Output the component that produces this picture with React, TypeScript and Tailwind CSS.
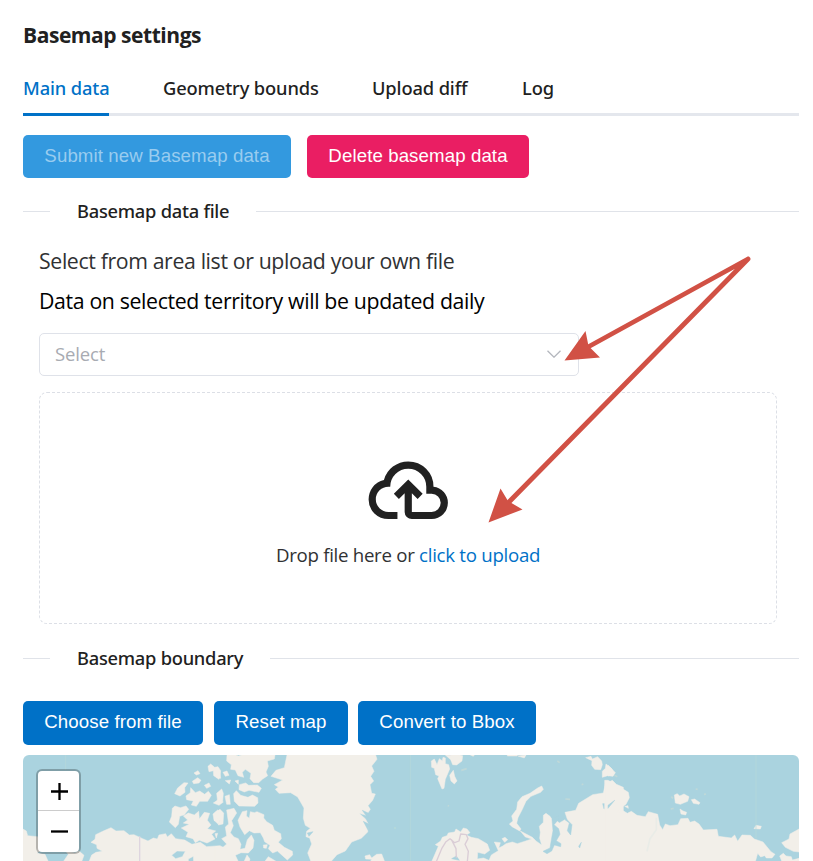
import React from "react";

const water = "#aad3df";
const land = "#f2efe9";

function Tab({ label, active, className }: { label: string; active?: boolean; className: string }) {
  return (
    <button
      className={`h-[54px] shrink-0 border-b-[3px] text-left font-['Noto_Sans',sans-serif] text-[18.3px] font-medium tracking-[-0.12px] whitespace-nowrap ${
        active ? "border-[#0071c7] text-[#0071c7]" : "border-[#e4e7ed] text-[#212121]"
      } ${className}`}
    >
      {label}
    </button>
  );
}

function Button({ label, className }: { label: string; className: string }) {
  return (
    <button
      className={`shrink-0 rounded-[5px] pb-[2px] text-center font-['Liberation_Sans',Arial,sans-serif] text-[18.67px] tracking-[0.1px] whitespace-nowrap ${className}`}
    >
      {label}
    </button>
  );
}

function Divider({ label, textClass }: { label: string; textClass: string }) {
  return (
    <div className="flex h-[28px] items-center">
      <div className="h-px w-[27px] bg-[#e0e3e9]" />
      <h2 className={`mx-[27px] shrink-0 font-['Noto_Sans',sans-serif] text-[18.3px] font-medium tracking-[-0.25px] whitespace-nowrap text-[#212121] ${textClass}`}>
        {label}
      </h2>
      <div className="h-px flex-1 bg-[#e0e3e9]" />
    </div>
  );
}

function CloudUpload() {
  return (
    <svg viewBox="0 0 24 24" className="h-[86.5px] w-[86.5px]" fill="#212121">
      <path d="M6.5 20Q4.22 20 2.61 18.43 1 16.85 1 14.58 1 12.63 2.17 11.1 3.35 9.57 5.25 9.15 5.88 6.85 7.75 5.43 9.63 4 12 4 14.93 4 16.96 6.04 19 8.07 19 11 20.73 11.2 21.86 12.5 23 13.78 23 15.5 23 17.38 21.69 18.69 20.38 20 18.5 20H13Q12.18 20 11.59 19.41 11 18.83 11 18V12.85L9.4 14.4 8 13 12 9 16 13 14.6 14.4 13 12.85V18H18.5Q19.55 18 20.27 17.27 21 16.55 21 15.5 21 14.45 20.27 13.73 19.55 13 18.5 13H17V11Q17 8.93 15.54 7.46 14.08 6 12 6 9.93 6 8.46 7.46 7 8.93 7 11H6.5Q5.05 11 4.03 12.03 3 13.05 3 14.5 3 15.95 4.03 17 5.05 18 6.5 18H9V20Z" />
    </svg>
  );
}

function WorldMap() {
  return (
    <svg viewBox="0 0 776 106" className="block h-[106px] w-[776px]">
      <rect width="776" height="106" fill={water} />
      {/* Alaska, northern Canada and the western arctic islands */}
      <g transform="translate(-8 -10) scale(.33333)" fill={land} stroke={land} strokeWidth="1.5" strokeLinejoin="round">
        <path d="M20 250L34 258 38 272 68 275 78 315 66 325 90 328 100 350H20Z" />
        <path d="M145 350L160 328 150 316 180 324 192 318 207 331 200 350Z" />
        <path d="M222 350L230 330 243 322 262 319 246 310 245 299 228 292 240 283 242 269 263 259 288 248 303 258 327 257 343 270 357 269 383 281 399 288 415 279 427 282 432 270 452 266 457 276 469 266 482 281 509 285 531 298 556 292 575 305 615 302 650 320V350Z" />
        <path d="M472 190L480 183 496 188 513 183 521 193 508 209 494 214 490 238 481 248 463 231 470 214Z" />
        <path d="M505 213L520 204 538 210 551 199 553 222 568 202 584 205 577 226 588 240 577 251 602 258 590 268 600 282 576 294 553 286 541 293 534 281 513 275 519 262 499 249 523 238 505 234 518 225Z" />
        <path d="M479 146L488 129 507 113 519 114 509 128 510 142 495 153Z" />
        <path d="M513 153L526 143 527 128 541 143 554 138 569 148 580 139 589 151 578 169 554 169 544 184 529 180 535 168 515 164Z" />
        <path d="M532 109L548 98 558 106 552 114 536 116Z" />
        <path d="M537 84L549 77 555 86 544 90Z" />
        <path d="M579 64L587 57 599 67 609 65 617 77 612 103 596 92 595 77 582 80Z" />
        <path d="M568 121L582 114 587 124 575 130Z" />
        <path d="M595 174L611 163 625 171 612 181Z" />
        <path d="M594 207L608 195 622 206 610 238 597 226Z" />
        <path d="M470 331L486 318 511 319 502 335 482 341Z M520 342L535 334 536 350H520Z" fill={water} />
        <path d="M374 274V350" stroke="#ded5df" strokeWidth="4" />
        <path d="M152 30V75" stroke="#b6dad9" strokeWidth="2" />
      </g>
      {/* Baffin Island, Ellesmere Island, Greenland and Iceland */}
      <g transform="translate(192 -10) scale(.33333)" fill={land} stroke={land} strokeWidth="1.5" strokeLinejoin="round">
        <path d="M36 30L49 25 70 33 97 25 128 30H180L178 42 157 48 160 64 153 81 158 92 142 103 131 113 116 113 105 101 108 85 91 73 82 82 86 97 69 92 61 75 47 73 49 59 35 48Z" />
        <path d="M73 119L92 114 101 121 127 120 139 130 132 142 102 136 88 141 72 134Z" />
        <path d="M56 146L64 137 77 151 99 157 112 150 128 158 129 174 119 184 72 183 58 169Z" />
        <path d="M5 145L20 132 25 145 23 169 8 171Z M30 154L43 149 46 178 35 178Z M0 69L15 78 17 100 5 98Z M24 82L36 78 42 91 31 94Z M31 107L47 105 43 117Z M60 108L70 105 70 118Z" />
        <path d="M69 226L82 200 96 197 94 213 103 220 106 200 118 203 126 200 147 209 146 219 155 230 173 241 178 256 197 266 199 281 190 292 208 307 232 319 233 330 217 345 196 326 187 318 173 324 160 311 165 301 149 290 145 279 136 263 117 264 103 257 89 269 75 246Z" />
        <path d="M35 195L57 190 65 204 50 227 55 242 46 263 57 276 70 281 78 298 75 313 90 310 97 284 109 270 117 286 114 309 100 324 78 323 61 331 70 350H0V307L24 307 35 297 20 281 35 273 31 246 41 237Z" />
        <path d="M0 203L15 193 26 204 24 237 10 240 15 225 2 219Z M0 266L8 265 4 279Z M145 300L157 299 154 310 146 309Z M87 350L96 330 105 342 103 350Z M149 350L160 335 185 350Z" />
        <path d="M216 30H482L486 43 470 63 477 79 467 94 476 108 465 119 470 145 481 147 473 166 459 182 466 193 454 211 432 205 451 221 461 239 458 261 439 280 410 291 391 318 366 329 348 350H288L278 324 290 297 284 279 273 275 275 259 286 250 271 241 265 220 267 189 248 156 227 143 192 145 181 133 190 126 178 119 203 105 168 94 183 76 208 68Z" />
        <path d="M461 205L442 196 460 221Z M463 238L445 229 460 257Z M277 264L294 260 282 274Z" fill={water} stroke={water} />
        <path d="M450 333L464 329 470 339 485 328 500 327 509 350H466L470 343 452 342Z" />
        <path d="M586 30V350" stroke="#b6dad9" strokeWidth="2" />
        <circle cx="540" cy="249" r="3" fill="#b6dad9" stroke="none" />
      </g>
      {/* Svalbard, Scandinavia, Novaya Zemlya and western Siberia */}
      <g transform="translate(392 -10) scale(.33333)" fill={land} stroke={land} strokeWidth="1.5" strokeLinejoin="round">
        <path d="M49 48L58 42 66 59 73 41 82 47 84 37 91 39 91 56 101 59 104 72 99 84 91 103 87 130 81 132 68 101 72 93 62 89 58 70 50 67Z" />
        <path d="M91 30L106 31 115 25 143 32 141 48 125 60 113 59 107 44Z M104 91L115 76 119 94 126 108 118 117 108 108Z M158 26H181L175 34Z M277 27H307V33H277Z M309 33L333 30 328 39Z" />
        <path d="M368 129L380 123 385 133 377 142 348 154 333 169 322 193 309 218 305 235 318 252 314 258 291 245 283 237 294 228 290 213 305 193 308 171 321 155 345 145Z" />
        <path d="M50 350L61 325 70 304 61 299 77 288 82 277 96 272 100 264 119 261 123 252 137 261 145 249 156 252 165 263 154 270 169 277 190 281 217 297 224 316 209 327 188 322 187 342 206 339 222 346 229 330 250 317 238 291 256 293 251 309 262 304 273 296 292 291 307 296 332 288 350 282 331 276 316 258 352 277 363 288 380 300 374 280 376 262 373 244 385 232 385 211 393 205 405 214 414 228 424 226 433 234 450 224 458 226 450 202 482 196 491 175 533 149 565 144 571 117 592 106 604 118 625 127V350Z" />
        <path d="M411 222L430 212 432 222 417 239 431 251 435 268 424 287 438 296 437 305 418 300 410 318 396 326 384 319 405 309 410 279 414 257 412 235Z M450 224L463 234 457 257 467 270 471 239 455 223Z M563 176L581 175 592 168 594 176 575 189 567 192Z M491 304L499 292 494 309Z M110 341L124 333 133 346Z" fill={water} stroke={water} />
        <path d="M261 281L270 277 278 284 269 292Z" />
        <path d="M512 38L528 34 532 42 548 35 560 48 562 59 557 74 539 73 530 61 531 47Z M562 97L562 79 571 70 573 57 587 68 601 83 594 94 578 92Z" />
        <path d="M427 48L434 53M451 162L465 163M500 119L505 117M98 182L102 183M139 76L155 71" stroke="#bfd8d8" strokeWidth="5" />
        <path d="M64 350L80 311 93 290 105 281 119 293 132 288 137 267 154 269 159 281 150 298 160 319 157 350M109 283L123 311 124 338" fill="none" stroke="#dacdd6" strokeWidth="4" />
      </g>
      {/* Eastern Siberia and the New Siberian Islands */}
      <g transform="translate(585 -10) scale(.33333)" fill={land} stroke={land} strokeWidth="1.5" strokeLinejoin="round">
        <path d="M0 61L12 72 15 88 0 93Z M0 106L17 115 20 130 45 132 61 142 64 158 54 178 39 188 24 208 47 198 58 205 70 199 87 211 112 215 121 200 149 208 155 240 164 254 172 237 186 242 210 239 218 221 240 220 246 232 260 228 273 237 286 255 327 253 331 274 370 279 380 270 389 289 402 270 427 271 439 282 465 291 489 320 501 328 492 339 475 339 470 332 458 336 449 325 442 350H-10V106Z" />
        <path d="M573 252L546 267 543 282 521 293 532 307 556 319 573 321ZM515 333L526 325 534 333 550 335 553 345 573 340V350H522Z M438 251L444 241 460 244 457 252Z" />
        <path d="M199 150L208 146 215 153 228 147 243 155 239 169 217 178 202 174Z M250 164L260 162 276 173 273 178 256 175Z M216 192L225 198 236 202 233 210 219 207Z M50 184L60 182 61 190Z" />
        <path d="M0 181L20 166 0 190Z" fill={water} stroke={water} />
        <path d="M190 155L195 160M188 192L197 190M263 132L269 133M288 148L294 147M19 91L28 95" stroke="#bfd8d8" strokeWidth="5" />
        <path d="M145 218V254L126 281 117 319" fill="none" stroke="#e9ece7" strokeWidth="5" />
        <path d="M444 30V280" stroke="#b6dad9" strokeWidth="2" />
      </g>
    </svg>
  );
}

function Arrows() {
  return (
    <svg viewBox="0 0 813 861" className="pointer-events-none absolute inset-0 h-[861px] w-[813px]">
      <g stroke="#d15145" strokeWidth="4.8" strokeLinecap="round">
        <path d="M748 259L588 347M748 259L508 503" />
      </g>
      <g fill="#d15145">
        <path d="M564.5 360.5L585.5 331 588.5 346 600 357.5Z" />
        <path d="M488.5 522.5L500.5 488.5 508 501 522.5 509.5Z" />
      </g>
    </svg>
  );
}

export default function App() {
  return (
    <div className="relative h-[861px] w-[813px] overflow-hidden bg-white pl-[23px] font-['Open_Sans','Noto_Sans',sans-serif]">
      <div className="flex w-[776px] flex-col">
        <h1 className="mt-[20px] h-[30px] text-[21px] leading-[31px] font-bold tracking-[-0.45px] whitespace-nowrap text-[#212121]">
          Basemap settings
        </h1>

        <nav className="mt-[12px] flex">
          <Tab label="Main data" active className="w-[86px]" />
          <div className="w-[54px] border-b-[3px] border-[#e4e7ed]" />
          <Tab label="Geometry bounds" className="w-[209px]" />
          <Tab label="Upload diff" className="w-[150px]" />
          <Tab label="Log" className="flex-1" />
        </nav>

        <div className="mt-[19px] flex gap-[16px]">
          <Button label="Submit new Basemap data" className="h-[43px] w-[268px] bg-[#3399df] text-[#99ccef]" />
          <Button label="Delete basemap data" className="h-[43px] w-[222px] bg-[#ea1e63] text-white" />
        </div>

        <div className="mt-[19px]">
          <Divider label="Basemap data file" textClass="w-[152px]" />
        </div>

        <section className="px-[16px]">
          <p className="mt-[20px] h-[32px] text-[21.3px] leading-[32px] tracking-[-0.38px] whitespace-nowrap text-[#303133]">
            Select from area list or upload your own file
          </p>
          <p className="mt-[8px] h-[32px] text-[21.3px] leading-[32px] tracking-[-0.37px] whitespace-nowrap text-black">
            Data on selected territory will be updated daily
          </p>
          <div className="mt-[16px] flex h-[43px] w-[540px] items-center justify-between rounded-[5px] border-[1.5px] border-[#dfe2e9] pr-[17px] pb-[1px] pl-[15px]">
            <span className="text-[18.5px] tracking-[-0.15px] text-[#a8abb2]">Select</span>
            <svg viewBox="0 0 14 8" className="h-[8px] w-[14px]" fill="none" stroke="#b4b7be" strokeWidth="1.3">
              <path d="M.5.7L7 7.2 13.5.7" />
            </svg>
          </div>
          <div className="mt-[16px] flex h-[232px] w-[738px] flex-col items-center rounded-[8px] border border-dashed border-[#dcdfe6] pt-[54px]">
            <CloudUpload />
            <p className="mt-[7px] h-[28px] text-[18.67px] leading-[28px] tracking-[-0.28px] whitespace-nowrap text-[#303133]">
              Drop file here or <span className="text-[#0071c7]">click to upload</span>
            </p>
          </div>
        </section>

        <div className="mt-[20px]">
          <Divider label="Basemap boundary" textClass="w-[166px]" />
        </div>

        <div className="mt-[29px] flex">
          <Button label="Choose from file" className="mr-[11px] h-[44px] w-[180px] bg-[#0071c7] text-white" />
          <Button label="Reset map" className="mr-[10px] h-[44px] w-[134px] bg-[#0071c7] text-white" />
          <Button label="Convert to Bbox" className="h-[44px] w-[178px] bg-[#0071c7] text-white" />
        </div>

        <div className="relative mt-[10px] h-[106px] overflow-hidden rounded-t-[6px]">
          <WorldMap />
          <div className="absolute top-[14px] left-[13px] flex h-[85px] w-[45px] flex-col rounded-[6px] border-2 border-black/25 bg-white bg-clip-padding">
            <button className="flex h-[40px] items-center justify-center border-b border-[#ccc]">
              <svg viewBox="0 0 17 17" className="mt-[2px] ml-[2px] h-[17px] w-[17px]" stroke="black" strokeWidth="2.3">
                <path d="M0 8.5H17M8.5 0V17" />
              </svg>
            </button>
            <button className="flex h-[40px] items-center justify-center">
              <svg viewBox="0 0 17 17" className="ml-[2px] h-[17px] w-[17px]" stroke="black" strokeWidth="2.3">
                <path d="M0 8.5H17" />
              </svg>
            </button>
          </div>
        </div>
      </div>
      <Arrows />
    </div>
  );
}
